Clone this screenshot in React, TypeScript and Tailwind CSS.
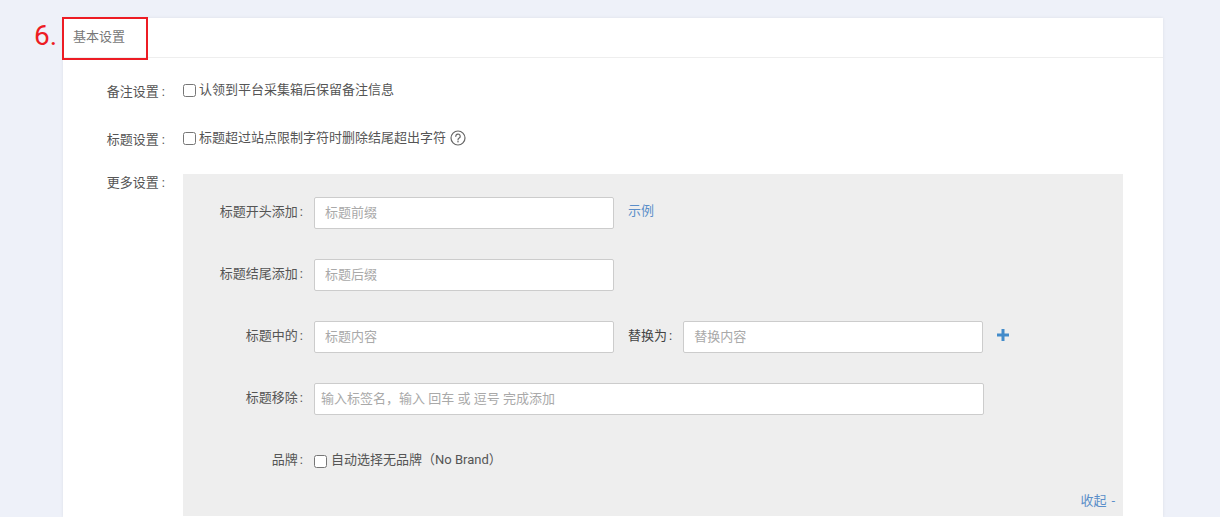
import type { ReactNode } from 'react'

const FONT = "font-['Roboto','Noto_Sans_CJK_SC',sans-serif]"

function Field({ placeholder, wide, indent }: { placeholder: string; wide?: boolean; indent?: boolean }) {
  return (
    <input
      placeholder={placeholder}
      className={`h-8 rounded-[2px] border border-[#cccccc] bg-white pb-[2px] text-[13px] text-[#333] outline-none placeholder:text-[#a9a9a9] ${
        wide ? 'w-[670px]' : 'w-[300px]'
      } ${indent ? 'px-[6px]' : 'px-[10px]'}`}
    />
  )
}

function InnerRow({ label, children, className }: { label: string; children: ReactNode; className?: string }) {
  return (
    <div className={`flex h-8 items-center ${className ?? ''}`}>
      <span className="mr-[11px] w-[120px] -translate-y-[1px] text-right text-[#555]">
        {label}
        <span className="ml-[2px]">:</span>
      </span>
      {children}
    </div>
  )
}

export default function App() {
  return (
    <div className={`${FONT} h-[517px] overflow-hidden bg-[#eef1f9] pl-[36px] pt-[18px] text-[13px] leading-[18px] text-[#555]`}>
      <div className="flex items-start">
        <span className="w-[27px] -translate-x-[2px] text-[28px] leading-[36px] text-[#ed1c24]">6.</span>

        <div className="relative w-[1100px] bg-white shadow-[0_0_3px_rgba(0,0,0,0.08)]">
          {/* red highlight drawn over the header */}
          <div className="absolute -left-[1px] -top-[1px] h-[43px] w-[86px] border-2 border-[#ed1c24]" />

          <div className="flex h-[40px] items-center border-b border-[#eeeeee] pb-[2px] pl-[10px] text-[#777]">基本设置</div>

          <div className="pt-[23px]">
            <div className="flex items-start">
              <span className="mt-[2px] w-[102px] text-right">
                备注设置<span className="ml-[3px]">:</span>
              </span>
              <label className="ml-[18px] flex items-center">
                <input type="checkbox" className="m-0 h-[13px] w-[13px]" />
                <span className="ml-[3px]">认领到平台采集箱后保留备注信息</span>
              </label>
            </div>

            <div className="mt-[28px] flex items-start">
              <span className="mt-[2px] w-[102px] text-right">
                标题设置<span className="ml-[3px]">:</span>
              </span>
              <label className="ml-[18px] flex items-center">
                <input type="checkbox" className="m-0 h-[13px] w-[13px]" />
                <span className="ml-[3px]">标题超过站点限制字符时删除结尾超出字符</span>
                <svg className="ml-[4px]" width="16" height="16" viewBox="0 0 16 16" fill="none" stroke="#666" strokeWidth="1.2">
                  <circle cx="8" cy="8" r="7" />
                  <path d="M5.8 6.3a2.2 2.2 0 1 1 3.4 1.8c-.8.5-1.2.9-1.2 1.8" strokeLinecap="round" />
                  <circle cx="8" cy="11.8" r=".8" fill="#666" stroke="none" />
                </svg>
              </label>
            </div>

            <div className="mt-[25px] flex items-start">
              <span className="w-[102px] text-right">
                更多设置<span className="ml-[3px]">:</span>
              </span>
              <div className="mb-[1px] ml-[18px] h-[342px] w-[940px] bg-[#eeeeee] pt-[23px]">
                <InnerRow label="标题开头添加">
                  <Field placeholder="标题前缀" />
                  <a className="ml-[14px] -translate-y-[2px] text-[#5b8ec9]">示例</a>
                </InnerRow>
                <InnerRow label="标题结尾添加" className="mt-[30px]">
                  <Field placeholder="标题后缀" />
                </InnerRow>
                <InnerRow label="标题中的" className="mt-[30px]">
                  <Field placeholder="标题内容" />
                  <span className="ml-[14px] mr-[11px] -translate-y-[1px] text-[#444]">
                    替换为<span className="ml-[2px]">:</span>
                  </span>
                  <Field placeholder="替换内容" />
                  <svg className="ml-[14px] -translate-y-[2px]" width="12" height="12" viewBox="0 0 12 12" fill="#428bca">
                    <path d="M4.5 0h3v4.5H12v3H7.5V12h-3V7.5H0v-3h4.5z" />
                  </svg>
                </InnerRow>
                <InnerRow label="标题移除" className="mt-[30px]">
                  <Field placeholder={'输入标签名\uFF0C输入 回车 或 逗号 完成添加'} wide indent />
                </InnerRow>
                <InnerRow label="品牌" className="mt-[30px]">
                  <label className="flex items-center">
                    <input type="checkbox" className="m-0 h-[13px] w-[13px]" />
                    <span className="ml-[4px] -translate-y-[1px]">{'自动选择无品牌\uFF08No Brand\uFF09'}</span>
                  </label>
                </InnerRow>
                <div className="mt-[15px] flex justify-end pr-[8px] text-[#5b8ec9]">
                  收起<span className="ml-[5px]">-</span>
                </div>
              </div>
            </div>
          </div>
        </div>
      </div>
    </div>
  )
}
